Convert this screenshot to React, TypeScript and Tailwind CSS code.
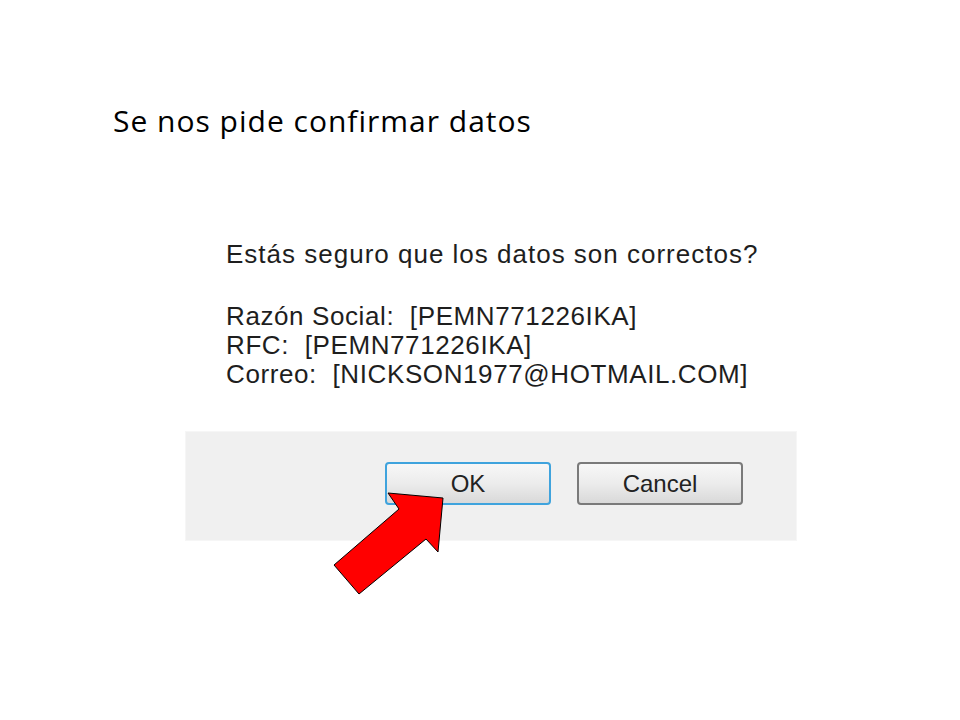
const ARROW = '388,493 443,498 438,552 426,539 359,594 334,565 399,509';

const DialogButton = ({ label, primary }: { label: string; primary?: boolean }) => (
  <button
    className={
      'w-[166px] h-[43px] rounded-[4px] border-2 bg-gradient-to-b from-[#f7f7f7] via-[#ececec] to-[#d9d9d9] text-[24px] text-[#222] leading-none ' +
      (primary ? 'border-[#3fa3dd]' : 'border-[#7a7a7a]')
    }
    style={{ fontFamily: '"Liberation Sans", Arial, sans-serif' }}
  >
    {label}
  </button>
);

const App = () => {
  return (
    <div className="relative w-[960px] h-[720px] bg-white overflow-hidden">
      <h1
        className="pl-[113px] pt-[106px] text-[30px] leading-[30px] tracking-[1px] text-black"
        style={{ fontFamily: '"Open Sans", "Noto Sans", sans-serif' }}
      >
        Se nos pide confirmar datos
      </h1>

      <div className="ml-[185px] mt-[94px] w-[612px]">
        {/* message body */}
        <div
          className="h-[201px] pl-[41px] pt-[10px] text-[26px] leading-[29px] text-[#1e1e1e]"
          style={{ fontFamily: '"Liberation Sans", Arial, sans-serif' }}
        >
          <p className="tracking-[1px]">Estás seguro que los datos son correctos?</p>
          <div className="mt-[33px] tracking-[0.6px]">
            <p>Razón Social:&nbsp; [PEMN771226IKA]</p>
            <p>RFC:&nbsp; [PEMN771226IKA]</p>
            <p>Correo:&nbsp; [NICKSON1977@HOTMAIL.COM]</p>
          </div>
        </div>

        {/* button bar */}
        <div className="h-[110px] bg-[#f0f0f0] border border-[#f6f6f6] flex items-start gap-[26px] pt-[30px] pl-[199px]">
          <DialogButton label="OK" primary />
          <DialogButton label="Cancel" />
        </div>
      </div>

      <svg className="absolute left-0 top-0" width="960" height="720" viewBox="0 0 960 720">
        <polygon points={ARROW} fill="#ff0000" stroke="#000" strokeWidth="1" strokeLinejoin="miter" />
      </svg>
    </div>
  );
};

export default App;
